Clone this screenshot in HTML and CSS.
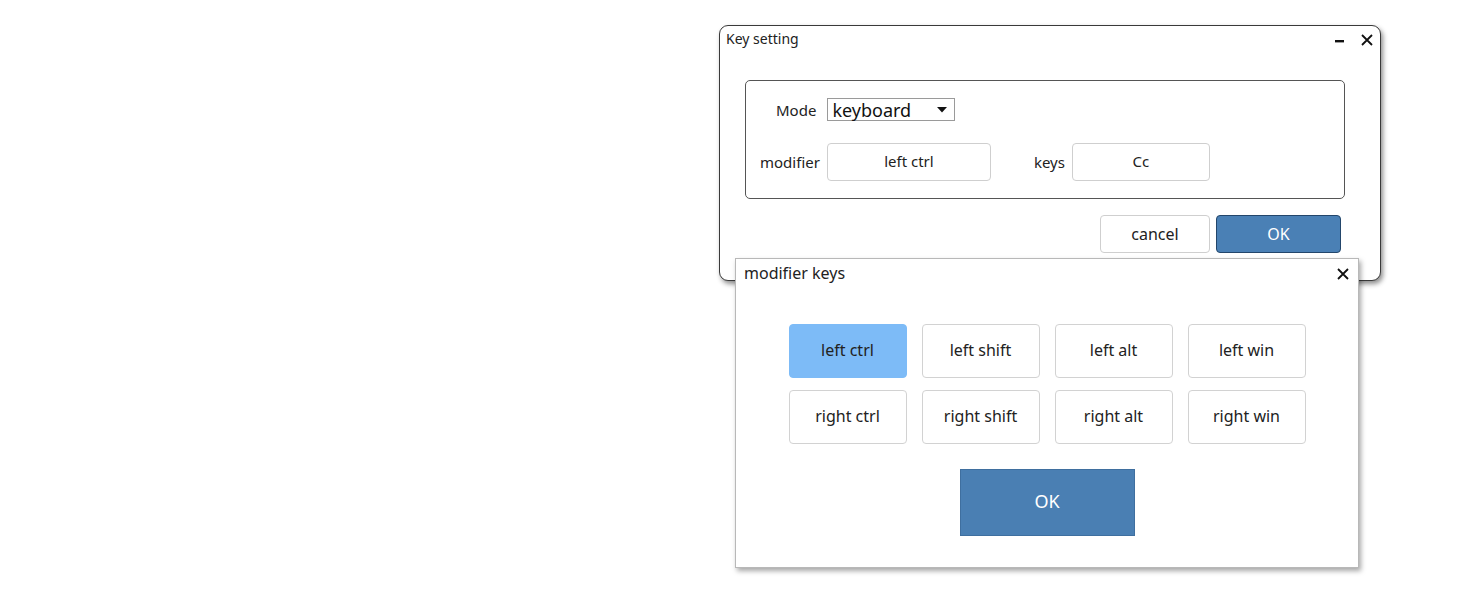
FILE: index.html
```html
<!DOCTYPE html>
<html>
<head>
<meta charset="utf-8">
<link rel="stylesheet" href="styles.css">
</head>
<body>
<div class="desktop">
  <div class="win win-key">
    <div class="titlebar">
      <span class="title">Key setting</span>
      <div class="ctrls">
        <svg class="ic" width="12" height="12" viewBox="0 0 12 12"><rect x="1" y="6" width="9" height="2.4" fill="#111"/></svg>
        <svg class="ic" width="14" height="14" viewBox="0 0 14 14"><path d="M2 2 L12 12 M12 2 L2 12" stroke="#111" stroke-width="1.8"/></svg>
      </div>
    </div>
    <div class="group">
      <div class="row row-mode">
        <span class="lbl lbl-mode">Mode</span>
        <div class="select">
          <span>keyboard</span>
          <svg width="10" height="6" viewBox="0 0 10 6"><path d="M0 0 H10 L5 5.5 Z" fill="#111"/></svg>
        </div>
      </div>
      <div class="row row-mod">
        <span class="lbl lbl-modifier">modifier</span>
        <div class="field field-mod">left ctrl</div>
        <span class="lbl lbl-keys">keys</span>
        <div class="field field-keys">Cc</div>
      </div>
    </div>
    <div class="actions">
      <button class="btn btn-cancel">cancel</button>
      <button class="btn btn-ok">OK</button>
    </div>
  </div>

  <div class="win win-mod">
    <div class="titlebar2">
      <span class="title2">modifier keys</span>
      <svg class="ic" width="14" height="14" viewBox="0 0 14 14"><path d="M2 2 L12 12 M12 2 L2 12" stroke="#111" stroke-width="1.8"/></svg>
    </div>
    <div class="grid">
      <button class="key key-on">left ctrl</button>
      <button class="key">left shift</button>
      <button class="key">left alt</button>
      <button class="key">left win</button>
      <button class="key">right ctrl</button>
      <button class="key">right shift</button>
      <button class="key">right alt</button>
      <button class="key">right win</button>
    </div>
    <div class="okwrap">
      <button class="bigok">OK</button>
    </div>
  </div>
</div>
</body>
</html>
```

FILE: styles.css
```css
* { box-sizing: border-box; }
html, body { margin: 0; padding: 0; background: #fff; }
body { font-family: "Noto Sans", "Open Sans", sans-serif; color: #222; }
.desktop { position: relative; width: 1464px; height: 600px; overflow: hidden; }

.win { position: absolute; background: #fff; }

.win-key {
  left: 719px; top: 25px; width: 662px; height: 256px;
  border: 1.5px solid #3a3a3a;
  border-radius: 9px;
  box-shadow: 2px 3px 5px rgba(0,0,0,0.45);
  display: flex; flex-direction: column;
}
.titlebar {
  height: 25px; display: flex; align-items: center; justify-content: space-between;
  padding: 0 6px 0 6px;
}
.title { font-size: 14px; color: #222; }
.ctrls { display: flex; align-items: center; gap: 14px; margin-top: 2px; }
.ic { display: block; }

.group {
  margin: 29px 35px 0 25px;
  height: 119px;
  border: 1px solid #555;
  border-radius: 5px;
  padding: 17px 0 0 14px;
  display: flex; flex-direction: column;
}
.row { display: flex; align-items: center; }
.lbl { font-size: 15px; color: #222; }
.lbl-mode { margin-left: 16px; margin-right: 11px; }
.select {
  width: 128px; height: 23px; border: 1px solid #9a9a9a;
  display: flex; align-items: center; justify-content: space-between;
  padding: 0 7px 0 4px; font-size: 18px; color: #111;
}
.row-mod { margin-top: 22px; }
.lbl-modifier { margin-right: 7px; }
.field {
  height: 38px; border: 1px solid #cfcfcf; border-radius: 4px;
  display: flex; align-items: center; justify-content: center;
  font-size: 15px; color: #222; padding-bottom: 2px;
}
.field-mod { width: 164px; }
.lbl-keys { margin-left: 43px; margin-right: 7px; }
.field-keys { width: 138px; }

.actions {
  display: flex; justify-content: flex-end; gap: 6px;
  margin: 16px 39px 0 0;
}
.btn {
  height: 38px; border-radius: 4px; font-family: inherit; font-size: 16px;
  display: flex; align-items: center; justify-content: center; padding: 0;
}
.btn-cancel { width: 110px; background: #fff; border: 1px solid #cfcfcf; color: #222; }
.btn-ok { width: 125px; background: #4a80b5; border: 1.5px solid #23466b; color: #fff; }

.win-mod {
  left: 735px; top: 258px; width: 624px; height: 310px;
  border: 1px solid #b8b8b8;
  box-shadow: 2px 3px 5px rgba(0,0,0,0.35);
  display: flex; flex-direction: column; align-items: center;
}
.titlebar2 {
  align-self: stretch; height: 30px; display: flex; align-items: center;
  justify-content: space-between; padding: 0 8px 0 8px;
}
.title2 { font-size: 16px; color: #222; margin-top: -2px; }
.grid {
  margin-top: 35px;
  display: grid; grid-template-columns: repeat(4, 118px);
  column-gap: 15px; row-gap: 12px;
}
.key {
  height: 54px; background: #fff; border: 1px solid #d2d2d2; border-radius: 4px;
  font-family: inherit; font-size: 16px; color: #222; padding: 0 0 3px 0;
}
.key-on { background: #7dbbf7; border-color: #7dbbf7; }
.okwrap { margin-top: 25px; display: flex; justify-content: center; }
.bigok {
  width: 175px; height: 67px; background: #4a7fb3; border: 1px solid #3f6f9f;
  color: #fff; font-family: inherit; font-size: 18px; padding: 0 0 3px 0;
}
```
